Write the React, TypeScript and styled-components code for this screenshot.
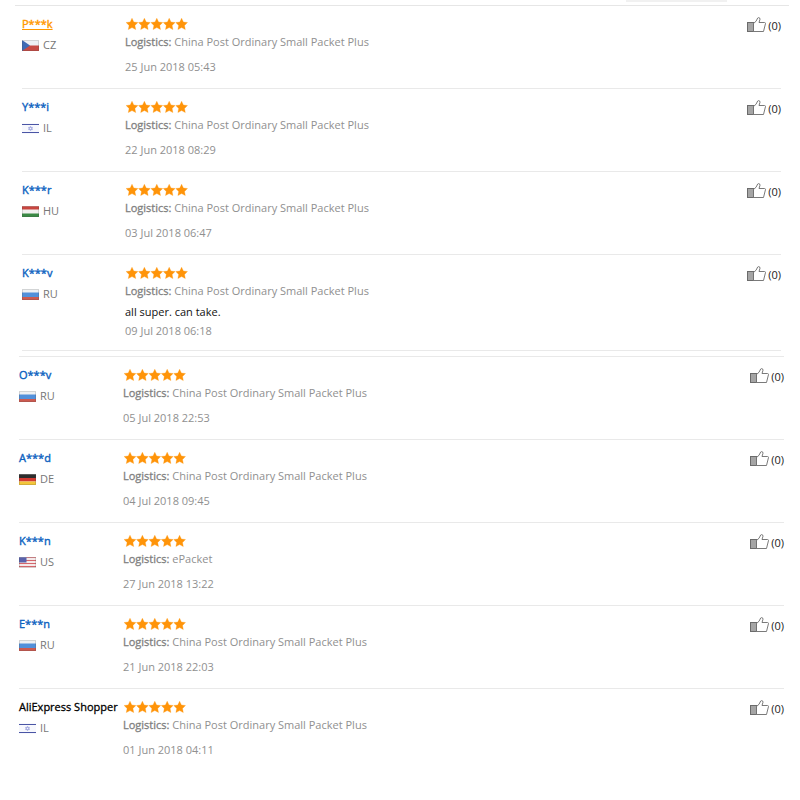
import React from "react";
import styled, { createGlobalStyle } from "styled-components";

const GlobalStyle = createGlobalStyle`
  body {
    margin: 0;
    background: #fff;
    font-family: "Open Sans", "Noto Sans", sans-serif;
    font-size: 11px;
    color: #000;
  }
`;

type Country = "CZ" | "IL" | "HU" | "RU" | "DE" | "US";

interface Review {
  name: string;
  country: Country;
  logistics: string;
  date: string;
  feedback?: string;
  kind?: "active" | "guest";
}

const POST = "China Post Ordinary Small Packet Plus";

const firstPage: Review[] = [
  { name: "P***k", country: "CZ", logistics: POST, date: "25 Jun 2018 05:43", kind: "active" },
  { name: "Y***i", country: "IL", logistics: POST, date: "22 Jun 2018 08:29" },
  { name: "K***r", country: "HU", logistics: POST, date: "03 Jul 2018 06:47" },
  { name: "K***v", country: "RU", logistics: POST, date: "09 Jul 2018 06:18", feedback: "all super. can take." },
];

const secondPage: Review[] = [
  { name: "O***v", country: "RU", logistics: POST, date: "05 Jul 2018 22:53" },
  { name: "A***d", country: "DE", logistics: POST, date: "04 Jul 2018 09:45" },
  { name: "K***n", country: "US", logistics: "ePacket", date: "27 Jun 2018 13:22" },
  { name: "E***n", country: "RU", logistics: POST, date: "21 Jun 2018 22:03" },
  { name: "AliExpress Shopper", country: "IL", logistics: POST, date: "01 Jun 2018 04:11", kind: "guest" },
];

const Page = styled.main`
  display: flex;
  flex-direction: column;
`;

const PanelEdge = styled.div`
  align-self: flex-end;
  width: 101px;
  height: 2px;
  margin-right: 73px;
  background: #f1f1f1;
`;

const TopRule = styled.hr`
  width: auto;
  height: 1px;
  margin: 3px 11px 0 15px;
  border: 0;
  background: #e6e6e6;
`;

const List = styled.ul<{ $second?: boolean }>`
  list-style: none;
  margin: 0;
  padding: ${(p) => (p.$second ? "0 16px 0 19px" : "0 19px 0 22px")};
  margin-top: ${(p) => (p.$second ? "5px" : "0")};
`;

const Row = styled.li<{ $second?: boolean }>`
  display: grid;
  grid-template-columns: ${(p) => (p.$second ? "104px" : "103px")} minmax(0, 1fr) auto;
  padding: 11px 0 12px;
  border-bottom: ${(p) => (p.$second ? "0" : "1px solid #e9e9e9")};
  border-top: ${(p) => (p.$second ? "1px solid #e9e9e9" : "0")};

  &:last-child {
    padding-bottom: 10px;
  }
`;

const Buyer = styled.div`
  display: flex;
  flex-direction: column;
  align-items: flex-start;
  white-space: nowrap;
`;

const NameLink = styled.a<{ $active?: boolean }>`
  line-height: 14px;
  -webkit-text-stroke: 0.4px currentColor;
  color: ${(p) => (p.$active ? "#ff9900" : "#0d62bf")};
  text-decoration: ${(p) => (p.$active ? "underline" : "none")};
`;

const GuestName = styled.span`
  line-height: 14px;
  -webkit-text-stroke: 0.3px #000;
`;

const CountryLine = styled.div`
  display: flex;
  align-items: center;
  gap: 4px;
  margin-top: 6px;
  line-height: 16px;
  color: #777;
`;

const Details = styled.div`
  display: flex;
  flex-direction: column;
  color: #909090;
`;

const StarRow = styled.svg`
  display: block;
  width: 63px;
  height: 14px;
`;

const Logistics = styled.div`
  line-height: 22px;
`;

const Label = styled.strong`
  font-weight: 400;
  color: #808080;
  -webkit-text-stroke: 0.3px #808080;
`;

const Feedback = styled.p`
  margin: 0;
  line-height: 20px;
  color: #111;
`;

const Timestamp = styled.time<{ $spaced: boolean }>`
  margin-top: ${(p) => (p.$spaced ? "5px" : "0")};
  line-height: 18px;
`;

const LikeButton = styled.button`
  display: flex;
  align-items: center;
  align-self: start;
  gap: 2px;
  margin: 0;
  padding: 0;
  height: 16px;
  border: 0;
  background: none;
  font: inherit;
  color: #222;
  cursor: pointer;
`;

const FlagArt: Record<Country, React.ReactNode> = {
  CZ: (
    <>
      <rect width="17" height="6" fill="#eef0f4" />
      <rect y="5.5" width="17" height="5.5" fill="#c74b45" />
      <path d="M0 0L8 5.5L0 11Z" fill="#3f6bb5" />
    </>
  ),
  IL: (
    <>
      <rect width="17" height="11" fill="#f7f8fd" />
      <rect y="1" width="17" height="1" fill="#4a55a5" />
      <rect y="9" width="17" height="1" fill="#4a55a5" />
      <path d="M8.500 3.300L10.500 6.600H6.500ZM8.500 7.700L6.500 4.400H10.500Z" fill="none" stroke="#8e96d8" strokeWidth=".6" />
    </>
  ),
  HU: (
    <>
      <rect width="17" height="11" fill="#f1f1ef" />
      <rect width="17" height="3.500" fill="#c9453f" />
      <rect y="7.500" width="17" height="3.500" fill="#3b8a45" />
    </>
  ),
  RU: (
    <>
      <rect width="17" height="11" fill="#eef0f3" />
      <rect y="3.500" width="17" height="4.500" fill="#5290da" />
      <rect y="8" width="17" height="3" fill="#cc5a50" />
    </>
  ),
  DE: (
    <>
      <rect width="17" height="4" fill="#2d2d2d" />
      <rect y="4" width="17" height="3.500" fill="#d33a31" />
      <rect y="7.500" width="17" height="3.500" fill="#f3c63a" />
    </>
  ),
  US: (
    <>
      <rect width="17" height="11" fill="#f5e9ea" />
      <path d="M0 .5H17M0 3.500H17M0 6.500H17M0 9.500H17" stroke="#d4666c" strokeWidth="1.200" />
      <rect width="7.500" height="5.500" fill="#5a62ac" />
    </>
  ),
};

const Flag = ({ country }: { country: Country }) => (
  <svg width="17" height="11" viewBox="0 0 17 11" aria-hidden="true">
    {FlagArt[country]}
    <path d="M0 .5H17" stroke="#fff" strokeOpacity=".25" />
    {country !== "IL" && (
      <rect x=".5" y=".5" width="16" height="10" fill="none" stroke="#444" strokeOpacity=".18" />
    )}
  </svg>
);

const Stars = () => (
  <StarRow viewBox="0 0 63 14" role="img" aria-label="5 out of 5 stars">
    {[0, 1, 2, 3, 4].map((i) => (
      <path
        key={i}
        transform={`translate(${1 + i * 12.4} 1)`}
        d="M6 .2L7.800 4L11.900 4.500L8.900 7.400L9.700 11.600L6 9.600L2.300 11.600L3.100 7.400L.1 4.500L4.200 4Z"
        fill="#ff9409"
        stroke="#ff9409"
        strokeWidth=".3"
      />
    ))}
  </StarRow>
);

const Thumb = () => (
  <svg width="20" height="16" viewBox="0 0 20 16" aria-hidden="true">
    <rect x="1.500" y="5.500" width="6" height="9" fill="#a5a5a5" stroke="#6b6b6b" />
    <path
      d="M7.500 14.500H17.500L19.500 6.500Q19.500 5.600 18.500 5.500H13L14 2.200Q14 .5 12.500 .6Q11.500 .7 11.200 2L10 4.300L7.500 6.500Z"
      fill="#fff"
      stroke="#6b6b6b"
      strokeWidth=".9"
      strokeLinejoin="round"
    />
  </svg>
);

const ReviewRow = ({ review, second }: { review: Review; second?: boolean }) => (
  <Row $second={second}>
    <Buyer>
      {review.kind === "guest" ? (
        <GuestName>{review.name}</GuestName>
      ) : (
        <NameLink href="#" $active={review.kind === "active"}>
          {review.name}
        </NameLink>
      )}
      <CountryLine>
        <Flag country={review.country} />
        {review.country}
      </CountryLine>
    </Buyer>
    <Details>
      <Stars />
      <Logistics>
        <Label>Logistics:</Label> {review.logistics}
      </Logistics>
      {review.feedback && <Feedback>{review.feedback}</Feedback>}
      <Timestamp $spaced={!review.feedback}>{review.date}</Timestamp>
    </Details>
    <LikeButton type="button" aria-label="Helpful (0)">
      <Thumb />
      <span>(0)</span>
    </LikeButton>
  </Row>
);

export default function App() {
  return (
    <>
      <GlobalStyle />
      <Page>
        <PanelEdge />
        <TopRule />
        <List>
          {firstPage.map((r) => (
            <ReviewRow key={r.name} review={r} />
          ))}
        </List>
        <List $second>
          {secondPage.map((r) => (
            <ReviewRow key={r.name} review={r} second />
          ))}
        </List>
      </Page>
    </>
  );
}
